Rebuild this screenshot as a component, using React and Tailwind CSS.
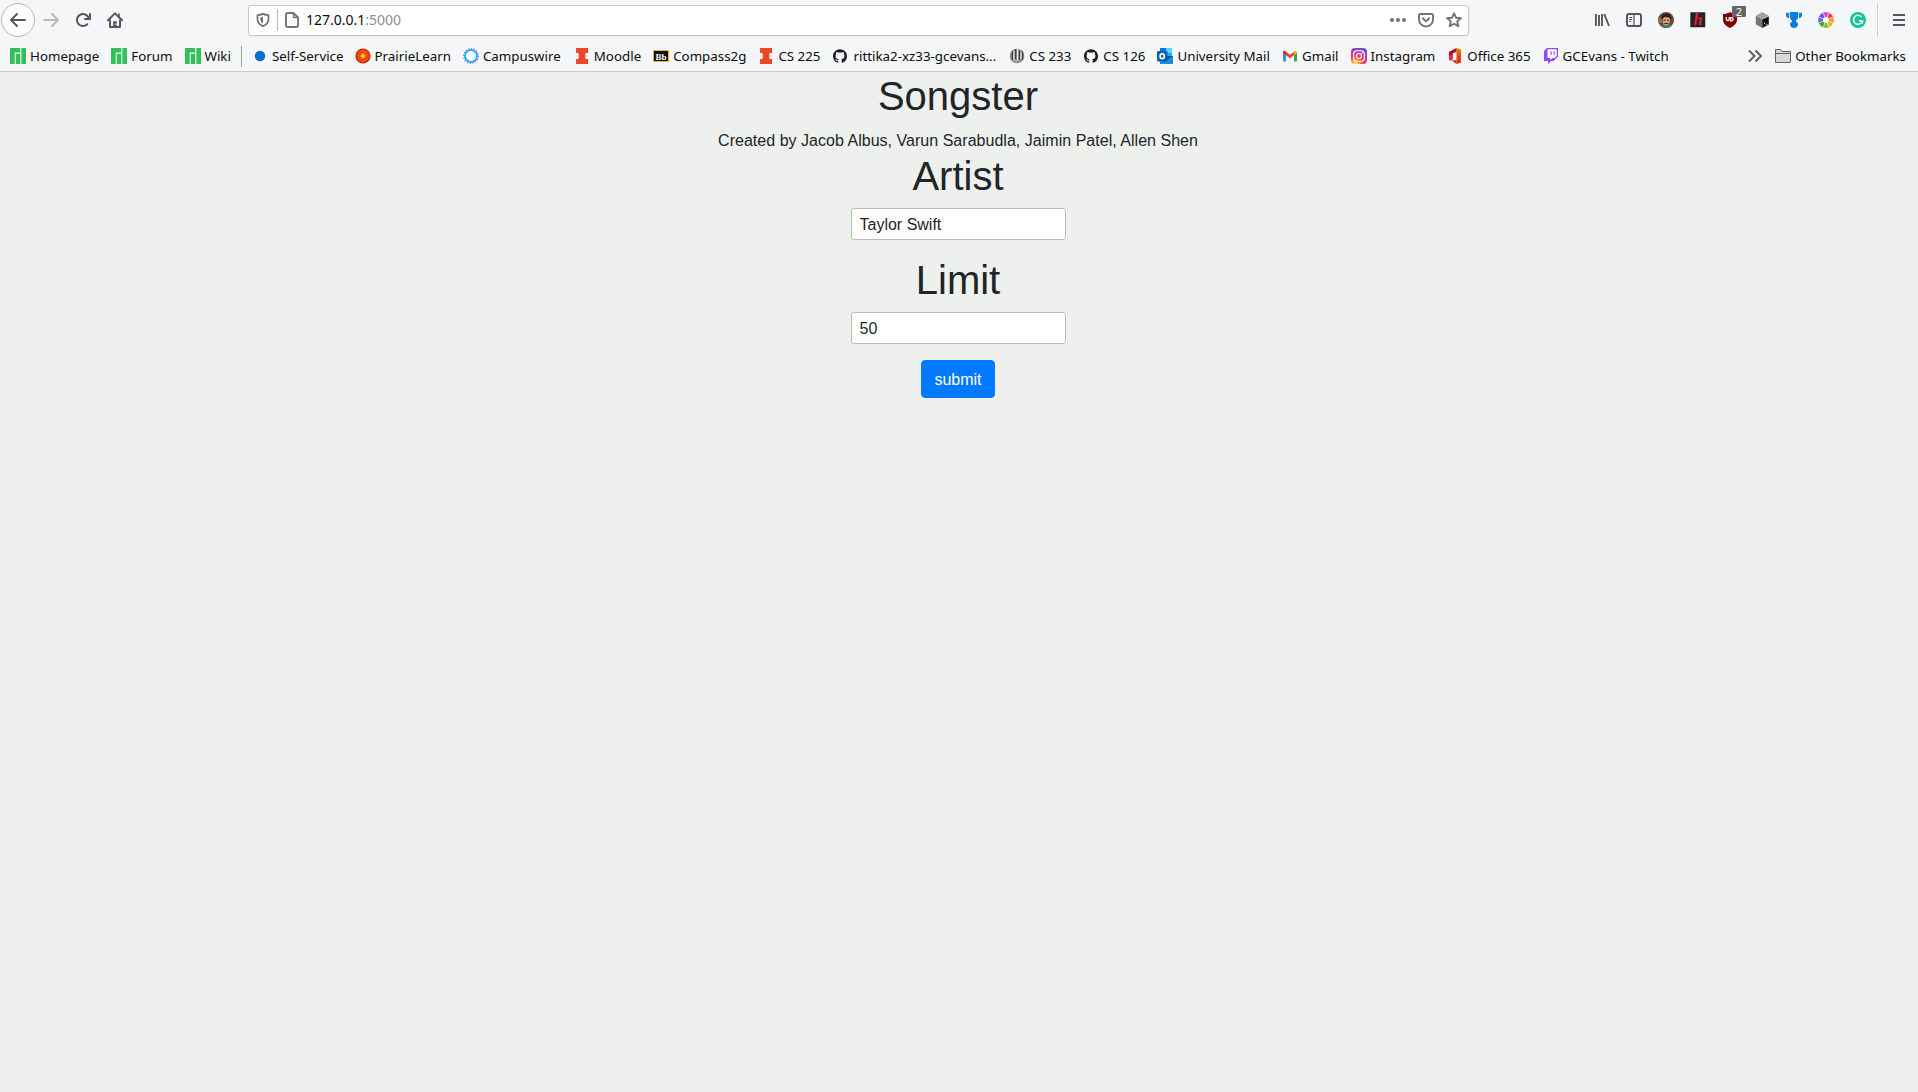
import { useState } from 'react'
import { SiGithub } from 'react-icons/si'

const Svg = ({ children, className = 'size-4', box = '0 0 16 16' }) => (
  <svg viewBox={box} className={`${className} shrink-0`} fill="none">
    {children}
  </svg>
)

// Toolbar icons
const ArrowIcon = ({ className }) => (
  <Svg className={className}>
    <path
      fill="currentColor"
      d="M15 7H3.414l4.293-4.293a1 1 0 0 0-1.414-1.414l-6 6a1 1 0 0 0 0 1.414l6 6a1 1 0 0 0 1.414-1.414L3.414 9H15a1 1 0 0 0 0-2z"
    />
  </Svg>
)

const ReloadIcon = () => (
  <Svg>
    <path
      fill="currentColor"
      d="M15 1a1 1 0 0 0-1 1v2.418A6.995 6.995 0 1 0 8 15a6.954 6.954 0 0 0 4.95-2.05 1 1 0 0 0-1.414-1.414A5.019 5.019 0 1 1 12.549 6H10a1 1 0 0 0 0 2h5a1 1 0 0 0 1-1V2a1 1 0 0 0-1-1z"
    />
  </Svg>
)

const HomeIcon = () => (
  <Svg>
    <path d="M1 8.3 8 1.4l7 6.9" stroke="currentColor" strokeWidth="2" strokeLinecap="round" strokeLinejoin="round" />
    <path d="M3 7.5V15h10V7.5" stroke="currentColor" strokeWidth="2" strokeLinejoin="round" />
    <path d="M12 1.5v4" stroke="currentColor" strokeWidth="1.6" />
    <path d="M6.2 15V9.2h3.6V15z" fill="currentColor" />
    <path d="M8.2 11.5h1v1.5h-1z" fill="#fff" />
  </Svg>
)

const ShieldIcon = () => (
  <Svg className="size-3.5">
    <path d="M8 1C6 2 4 2.3 1.7 2.3v4.5c0 4 2.6 6.6 6.3 8.2 3.7-1.6 6.3-4.2 6.3-8.2V2.3C12 2.3 10 2 8 1z" stroke="currentColor" strokeWidth="2" strokeLinejoin="round" />
    <path d="M8 4.2c-1 .5-2 .7-3.2.8v2c0 2.2 1.2 3.8 3.2 5z" fill="currentColor" />
  </Svg>
)

const PageIcon = () => (
  <Svg>
    <path d="M3.5 1h6L14 5.5v8a1.5 1.5 0 0 1-1.5 1.5h-9A1.5 1.5 0 0 1 2 13.5v-11A1.5 1.5 0 0 1 3.5 1z" stroke="currentColor" strokeWidth="1.9" strokeLinejoin="round" />
    <path d="M9.5 1v4.5H14" stroke="currentColor" strokeWidth="1.4" />
  </Svg>
)

const DotsIcon = () => (
  <Svg>
    <circle cx="2" cy="8" r="2" fill="currentColor" />
    <circle cx="8" cy="8" r="2" fill="currentColor" />
    <circle cx="14" cy="8" r="2" fill="currentColor" />
  </Svg>
)

const PocketIcon = () => (
  <Svg>
    <path d="M2.2 2h11.6A1.2 1.2 0 0 1 15 3.2v4.3a7 7 0 0 1-14 0V3.2A1.2 1.2 0 0 1 2.2 2z" stroke="currentColor" strokeWidth="1.9" />
    <path d="M4.8 6.300 8 9.400l3.200-3.100" stroke="currentColor" strokeWidth="1.9" strokeLinecap="round" strokeLinejoin="round" />
  </Svg>
)

const StarIcon = () => (
  <Svg>
    <path d="m8 1.3 2 4.4 4.900.5-3.700 3.200 1.100 4.900L8 11.800l-4.300 2.500 1.100-4.900L1.100 6.200 6 5.700z" stroke="currentColor" strokeWidth="1.9" strokeLinejoin="round" />
  </Svg>
)

const LibraryIcon = () => (
  <Svg>
    <path d="M1.9 2v12M5 3v11M8 2v12M10.3 2.2 15 14" stroke="currentColor" strokeWidth="1.9" />
  </Svg>
)

const SidebarIcon = () => (
  <Svg>
    <rect x="1" y="2" width="14" height="12" rx="2" stroke="currentColor" strokeWidth="2" />
    <path d="M8 2v12" stroke="currentColor" strokeWidth="1.3" />
    <path d="M3.2 5.5h3M3.2 7.5h3M3.2 9.5h2" stroke="currentColor" strokeWidth="1" />
  </Svg>
)

const MenuIcon = () => (
  <Svg>
    <path d="M2 3h12M2 8h12M2 13h12" stroke="currentColor" strokeWidth="2" />
  </Svg>
)

// Extension icons
const AvatarIcon = () => (
  <Svg>
    <defs>
      <clipPath id="avatar">
        <circle cx="8" cy="8" r="8" />
      </clipPath>
    </defs>
    <g clipPath="url(#avatar)">
      <path fill="#6b4a30" d="M0 0h16v16H0z" />
      <path fill="#a5683f" d="M0 6h4v5H0z" />
      <path fill="#4f7a62" d="M2 16c0-3 3-4 6-4s6 1 6 4z" />
      <ellipse cx="8.3" cy="8.5" rx="3.7" ry="4.8" fill="#d6a27c" />
      <path fill="#2b1c17" d="M3.5 8C3 4 5 1.5 8.5 1.5S14 4 13 8l-1.500-2.500-5-.5z" />
      <path fill="#3a2620" d="M5.600 7.800h2v.9h-2zM9.200 7.800h2v.9h-2zM6.400 11h4v1h-4z" />
    </g>
  </Svg>
)

const HoneyIcon = () => (
  <Svg>
    <rect x="0.3" y="0.3" width="15" height="15" rx="0.8" fill="#222325" />
    <text x="8" y="13" textAnchor="middle" fontSize="16" fontStyle="italic" fontWeight="bold" fill="#e8202c" className="font-['Liberation_Serif',serif]">h</text>
  </Svg>
)

const BlockerIcon = () => (
  <div className="relative size-4">
    <Svg>
      <path fill="#800000" d="M8 0c2 1.500 4.500 2 7 2v5.500c0 4-3 6.800-7 8.500-4-1.700-7-4.500-7-8.500V2c2.500 0 5-.5 7-2z" />
      <path d="M4.300 5v2.300a1.400 1.400 0 0 0 2.800 0V5" stroke="#fff" strokeWidth="1.2" />
      <path d="M8.600 5.600h1a1.600 1.600 0 0 1 0 3.300h-1z" stroke="#fff" strokeWidth="1.2" />
    </Svg>
    <span className="absolute -top-1.5 left-2.5 flex h-[11px] w-3.5 items-center justify-center rounded-[1px] bg-[#666] text-[11px] leading-none text-white">
      2
    </span>
  </div>
)

const CubeIcon = () => (
  <Svg>
    <path fill="#a3a3a3" d="m8.300 0 6.500 3.800-6.500 3.800-6.500-3.800z" />
    <path fill="#757575" d="m1.800 3.800 6.500 3.800V16l-6.500-3.800z" />
    <path fill="#0c0c0c" d="m8.300 7.600 6.500-3.200v8L8.300 16z" />
    <path d="m10 10.500.8.600-.8 1M12 12.300h1.500" stroke="#fff" strokeWidth="0.8" />
  </Svg>
)

const TrophyIcon = () => (
  <Svg>
    <path fill="#0a7fe0" d="M4 0h8v5c0 1.500-.8 2.800-2 3.600v1.200c1.300.6 2 1.400 2 2.500C12 14.400 10.200 16 8 16s-4-1.600-4-3.700c0-1.100.7-1.900 2-2.500V8.600C4.800 7.800 4 6.500 4 5z" />
    <path fill="#0a7fe0" d="M0 .7h3.200v5.500C1.200 5.900 0 4.800 0 3.500zM12.800.7H16v2.800c0 1.300-1.200 2.400-3.200 2.700z" />
  </Svg>
)

// starts at the top, clockwise
const wheelColors = ['#c94ad6', '#ef3b5c', '#f79a1e', '#f9b51f', '#7cc62c', '#43a52b', '#5d6fe8', '#8a48e0']

const WheelIcon = () => (
  <Svg>
    {wheelColors.map((c, i) => (
      <path key={c} d="M8 8 4.900.500A8 8 0 0 1 11.100.500z" fill={c} stroke="#fff" strokeWidth="0.4" transform={`rotate(${i * 45} 8 8)`} />
    ))}
    <circle cx="8" cy="8" r="3" fill="#fff" />
  </Svg>
)

const GrammarIcon = () => (
  <Svg>
    <circle cx="8" cy="8" r="8" fill="#15c39a" />
    <path d="M11.500 4.900A4.500 4.500 0 1 0 12.400 9H9" stroke="#fff" strokeWidth="1.5" />
    <path d="M10.300 9.200h2.300v2.300" stroke="#fff" strokeWidth="1.2" />
  </Svg>
)

// Bookmark favicons
const ManjaroIcon = () => (
  <Svg>
    <path fill="#35bf5c" d="M0 0h10.300v4.600H4.700V16H0zM5.700 5.700h4.600V16H5.700zM11.400 0H16v16h-4.600z" />
  </Svg>
)

const DotIcon = () => (
  <Svg>
    <circle cx="8" cy="8" r="5.2" fill="#0a6fc8" />
  </Svg>
)

const FlowerIcon = () => (
  <Svg>
    <defs>
      <radialGradient id="flower">
        <stop offset="0" stopColor="#ffe15a" />
        <stop offset="0.2" stopColor="#f9b52c" />
        <stop offset="0.38" stopColor="#f0500f" />
        <stop offset="0.8" stopColor="#ea3c0c" />
        <stop offset="1" stopColor="#9c1f0a" />
      </radialGradient>
    </defs>
    <circle cx="8" cy="8" r="7.6" fill="url(#flower)" />
    <circle cx="8" cy="8" r="4.8" stroke="#f9602c" strokeWidth="1.4" strokeDasharray="0.9 1.600" />
  </Svg>
)

const CampuswireIcon = () => (
  <Svg>
    <circle cx="8" cy="8" r="7.2" stroke="#b46cf5" strokeWidth="1.5" strokeDasharray="1.400 1.400" />
    <circle cx="8" cy="8" r="6" fill="#fff" stroke="#1fb4f8" strokeWidth="2" />
  </Svg>
)

const IllinoisIcon = () => (
  <Svg>
    <path fill="#e84a27" d="M2 0h12v5h-2.600v6H14v5H2v-5h2.600V5H2z" />
  </Svg>
)

const BlackboardIcon = () => (
  <Svg>
    <rect x="0.5" y="2.5" width="15" height="11" fill="#111" stroke="#e5b72e" />
    <text x="8" y="11.5" textAnchor="middle" fontSize="9" fontWeight="bold" fill="#fff" className="font-['Liberation_Serif',serif]">Bb</text>
  </Svg>
)

const GithubIcon = () => <SiGithub className="mx-px size-3.5 shrink-0 text-[#1b1f23]" />

const Cs233Icon = () => (
  <Svg>
    <defs>
      <clipPath id="cs233">
        <circle cx="8" cy="8" r="7.3" />
      </clipPath>
    </defs>
    <g clipPath="url(#cs233)">
      <path fill="#8c8c8c" d="M0 0h16v16H0z" />
      <path d="M3.500 3v9M6.500 1v10M10.500 3v9M13.500 3v9" stroke="#3e3e3e" strokeWidth="1.3" />
      <path d="M5 3v9M8.600 1v12M12 4v7" stroke="#f0f0f0" strokeWidth="1.1" />
      <path d="M2 13h12" stroke="#aaa" strokeWidth="1.2" />
    </g>
  </Svg>
)

const OutlookIcon = () => (
  <Svg>
    <path fill="#28a8ea" d="M3 0h12v9H3z" />
    <path fill="#50d9ff" d="M9 0h6v5H9z" />
    <path fill="#0f78d4" d="M3 0h6v5H3z" />
    <path fill="#1490df" d="M3 8h13v8H3z" />
    <path fill="#0a4f94" d="M10 8h6l-6 4z" />
    <rect y="3" width="10.5" height="10.5" rx="1" fill="#0f62b0" />
    <ellipse cx="5.2" cy="8.2" rx="2.1" ry="2.4" stroke="#fff" strokeWidth="1.6" />
  </Svg>
)

const GmailIcon = () => (
  <Svg>
    <path fill="#4285f4" d="M1 4.500 4 7v6.500H2a1 1 0 0 1-1-1z" />
    <path fill="#34a853" d="m12 7 3-2.500v8a1 1 0 0 1-1 1h-2z" />
    <path fill="#fbbc04" d="m12 3.700.8-.7C13.700 2.300 15 3 15 4.100v.7l-3 2.400z" />
    <path fill="#ea4335" d="m4 3.700 4 3 4-3v3.500l-4 3-4-3z" />
    <path fill="#c5221f" d="M4 3.700 3.200 3C2.300 2.300 1 3 1 4.100v.7l3 2.400z" />
  </Svg>
)

const InstagramIcon = () => (
  <Svg>
    <defs>
      <radialGradient id="insta" cx="0.27" cy="1.05" r="1.05">
        <stop offset="0.05" stopColor="#fd5" />
        <stop offset="0.3" stopColor="#fd8a3c" />
        <stop offset="0.52" stopColor="#f0344f" />
        <stop offset="0.78" stopColor="#c837ab" />
        <stop offset="1" stopColor="#5b4fd0" />
      </radialGradient>
    </defs>
    <rect width="16" height="16" rx="4" fill="url(#insta)" />
    <rect x="2.7" y="2.7" width="10.6" height="10.6" rx="3" stroke="#fff" strokeWidth="1.1" />
    <circle cx="8" cy="8" r="2.5" stroke="#fff" strokeWidth="1.2" />
    <circle cx="11.2" cy="4.8" r="0.7" fill="#fff" />
  </Svg>
)

const OfficeIcon = () => (
  <Svg>
    <defs>
      <linearGradient id="office" x1="0" y1="0" x2="0" y2="1">
        <stop offset="0" stopColor="#f08a00" />
        <stop offset="0.5" stopColor="#e04a08" />
        <stop offset="1" stopColor="#d92f10" />
      </linearGradient>
    </defs>
    <path fill="url(#office)" d="m9.500 0 4.500 1.500v13L9.500 16z" />
    <path fill="#b01217" d="M9.500 0v4L5.800 5.200v5.600l-2.400 1.500-1.400-.9V3.800z" />
    <path fill="#e0304c" d="M2 8v3.500c0 1 1.600 1.200 2.300.8l1.500-1.500V6.500z" />
    <path fill="#e0263a" d="M4.400 12.300h5.100V16z" />
  </Svg>
)

const TwitchIcon = () => (
  <Svg>
    <path fill="#9146ff" d="M4 0h11v8.500L10.500 13H8l-3 3v-3H1V3z" />
    <path fill="#fff" d="M4.500 1.300h9.200v6.600l-2.200 2.200H9.300l-2 2v-2H4.500z" />
    <path fill="#9146ff" d="M7.500 3.200h1.200v3.600H7.500zM10.600 3.200h1.200v3.600h-1.200z" />
  </Svg>
)

const ChevronsIcon = () => (
  <Svg>
    <path d="m2 2.500 5.500 5.500L2 13.500M8.500 2.500 14 8l-5.500 5.500" stroke="currentColor" strokeWidth="2" />
  </Svg>
)

const FolderIcon = () => (
  <Svg>
    <path d="M.5 14.500v-13h5l1.500 2h8.500v11z" fill="#d6d7d8" stroke="#606264" />
    <path d="M.5 5.500h15" stroke="#606264" />
  </Svg>
)

const pinned = [
  { label: 'Homepage', Icon: ManjaroIcon },
  { label: 'Forum', Icon: ManjaroIcon },
  { label: 'Wiki', Icon: ManjaroIcon },
]

const bookmarks = [
  { label: 'Self-Service', Icon: DotIcon, className: '-mx-px gap-1' },
  { label: 'PrairieLearn', Icon: FlowerIcon },
  { label: 'Campuswire', Icon: CampuswireIcon, className: 'mr-px gap-1' },
  { label: 'Moodle', Icon: IllinoisIcon },
  { label: 'Compass2g', Icon: BlackboardIcon },
  { label: 'CS 225', Icon: IllinoisIcon },
  { label: 'rittika2-xz33-gcevans...', Icon: GithubIcon, className: 'mr-px gap-[5px]' },
  { label: 'CS 233', Icon: Cs233Icon },
  { label: 'CS 126', Icon: GithubIcon },
  { label: 'University Mail', Icon: OutlookIcon },
  { label: 'Gmail', Icon: GmailIcon },
  { label: 'Instagram', Icon: InstagramIcon },
  { label: 'Office 365', Icon: OfficeIcon },
  { label: 'GCEvans - Twitch', Icon: TwitchIcon },
]

const extensions = [LibraryIcon, SidebarIcon, AvatarIcon, HoneyIcon, BlockerIcon, CubeIcon, TrophyIcon, WheelIcon, GrammarIcon]

const Bookmark = ({ label, Icon, className = 'gap-1' }) => (
  <a className={`flex items-center whitespace-nowrap ${className}`}>
    <Icon />
    <span className="pt-0.5">{label}</span>
  </a>
)

const NavBar = () => (
  <div className="flex h-10 items-center text-[#55575a]">
    <button className="ml-px flex size-[34px] shrink-0 items-center justify-center rounded-full border border-[#b4b5b6] bg-[#fcfcfd]">
      <ArrowIcon />
    </button>
    <div className="ml-2 flex w-[205px] shrink-0 items-center gap-4">
      <span className="text-[#b9babc]">
        <ArrowIcon className="size-4 rotate-180" />
      </span>
      <ReloadIcon />
      <HomeIcon />
    </div>
    <div className="flex h-[31px] w-[1221px] shrink-0 items-center rounded-[3px] border border-[#c6c8ca] bg-white pr-1.5 pl-[7px] text-[#737373] shadow-xs">
      <ShieldIcon />
      <div className="mr-[6px] ml-[7px] h-[22px] w-px bg-[#b5b5b5]" />
      <PageIcon />
      <span className="ml-1.5 flex-1 text-sm text-[#0c0c0d]">
        127.0.0.1<span className="text-[#8f8f90]">:5000</span>
      </span>
      <div className="flex gap-3">
        <DotsIcon />
        <PocketIcon />
        <StarIcon />
      </div>
    </div>
    <div className="ml-auto flex items-center gap-4">
      {extensions.map((Icon, i) => (
        <Icon key={i} />
      ))}
    </div>
    <div className="ml-[11px] h-[34px] w-px bg-[#d3d4d6]" />
    <div className="mr-[11px] ml-[13px]">
      <MenuIcon />
    </div>
  </div>
)

const BookmarksBar = () => (
  <div className="flex h-[31px] items-center gap-3 pt-px pr-3 pl-2.5 text-[13.33px] text-[#0c0c0d]">
    {pinned.map((b) => (
      <Bookmark key={b.label} {...b} />
    ))}
    <div className="-mr-px -ml-0.5 h-[21px] w-px bg-[#9fa1a3]" />
    {bookmarks.map((b) => (
      <Bookmark key={b.label} {...b} />
    ))}
    <div className="ml-auto text-[#606264]">
      <ChevronsIcon />
    </div>
    <Bookmark label="Other Bookmarks" Icon={FolderIcon} />
  </div>
)

const Field = ({ title, value, onChange }) => (
  <label className="mb-4 flex flex-col items-center">
    <h1 className="mb-2 text-[40px] leading-[48px]">{title}</h1>
    <input
      type="text"
      value={value}
      onChange={(e) => onChange(e.target.value)}
      className="h-8 w-[215px] rounded-[3px] border border-[#b9bbbb] bg-white px-2 pt-0.5 text-base outline-none"
    />
  </label>
)

export default function App() {
  const [artist, setArtist] = useState('Taylor Swift')
  const [limit, setLimit] = useState('50')

  return (
    <div className="flex h-screen flex-col overflow-hidden bg-[#eef0ed]">
      <header className="h-[72px] shrink-0 border-b border-[#c8cac8] bg-[#f5f6f8] font-['Noto_Sans',sans-serif]">
        <NavBar />
        <BookmarksBar />
      </header>
      <main className="flex-1 pr-0.5 text-center font-['Liberation_Sans',sans-serif] text-base text-[#212529]">
        <h1 className="mb-2 text-[40px] leading-[48px]">Songster</h1>
        <p className="h-6 leading-[26px] tracking-[0.025px]">
          Created by Jacob Albus, Varun Sarabudla, Jaimin Patel, Allen Shen
        </p>
        <form onSubmit={(e) => e.preventDefault()}>
          <Field title="Artist" value={artist} onChange={setArtist} />
          <Field title="Limit" value={limit} onChange={setLimit} />
          <button type="submit" className="rounded border border-[#007bff] bg-[#007bff] px-3 pt-[7px] pb-[5px] text-white">
            submit
          </button>
        </form>
      </main>
    </div>
  )
}
